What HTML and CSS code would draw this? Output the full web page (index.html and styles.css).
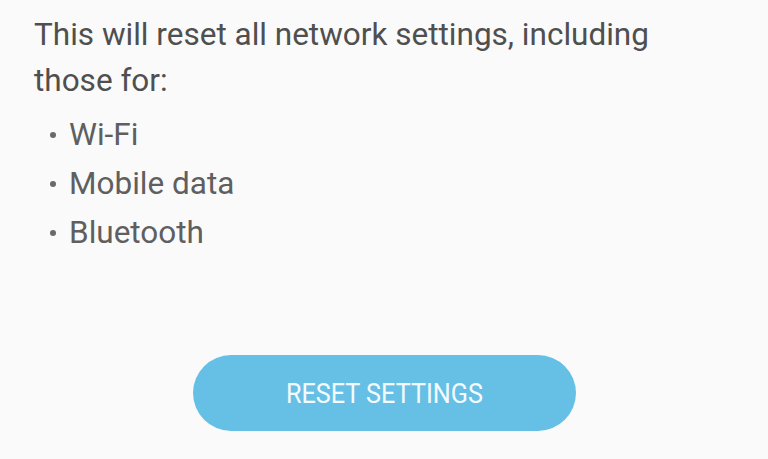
FILE: index.html
```html
<!DOCTYPE html>
<html lang="en">
<head>
    <meta charset="UTF-8">
    <meta name="viewport" content="width=device-width, initial-scale=1.0">
    <title>Reset network settings</title>
    <link rel="stylesheet" href="styles.css">
</head>
<body>
    <div class="reset-container">
        <p class="description">This will reset all network settings, including those for:</p>
        <ul class="network-list">
            <li>Wi-Fi</li>
            <li>Mobile data</li>
            <li>Bluetooth</li>
        </ul>

        <div class="button-row">
            <button class="reset-button" type="button"><span>RESET SETTINGS</span></button>
        </div>
    </div>
</body>
</html>
```

FILE: styles.css
```css
body, html {
    margin: 0;
    padding: 0;
    height: 100%;
    background-color: #fafafa;
    font-family: 'Roboto', 'Liberation Sans', sans-serif;
}

.reset-container {
    padding: 12px 34px 0 34px;
}

.description {
    margin: 0;
    width: 680px;
    font-size: 31.5px;
    line-height: 46px;
    color: #4f4f4f;
}

.network-list {
    list-style: none;
    margin: 6px 0 0 0;
    padding: 0;
}

.network-list li {
    display: flex;
    align-items: center;
    height: 49px;
    font-size: 31.5px;
    color: #5f5f5f;
}

.network-list li::before {
    content: "";
    width: 6px;
    height: 6px;
    border-radius: 50%;
    background-color: #6a6a6a;
    margin: 0 13px 0 16px;
}

.button-row {
    display: flex;
    justify-content: center;
    margin-top: 98px;
    padding-left: 1px;
}

.reset-button {
    width: 383px;
    height: 76px;
    border: none;
    border-radius: 38px;
    background-color: #66c0e6;
    color: #f4fbff;
    font-family: 'Roboto', 'Liberation Sans', sans-serif;
    font-size: 28px;
    cursor: pointer;
}

.reset-button span {
    display: inline-block;
    transform: scaleX(0.9);
}
```
